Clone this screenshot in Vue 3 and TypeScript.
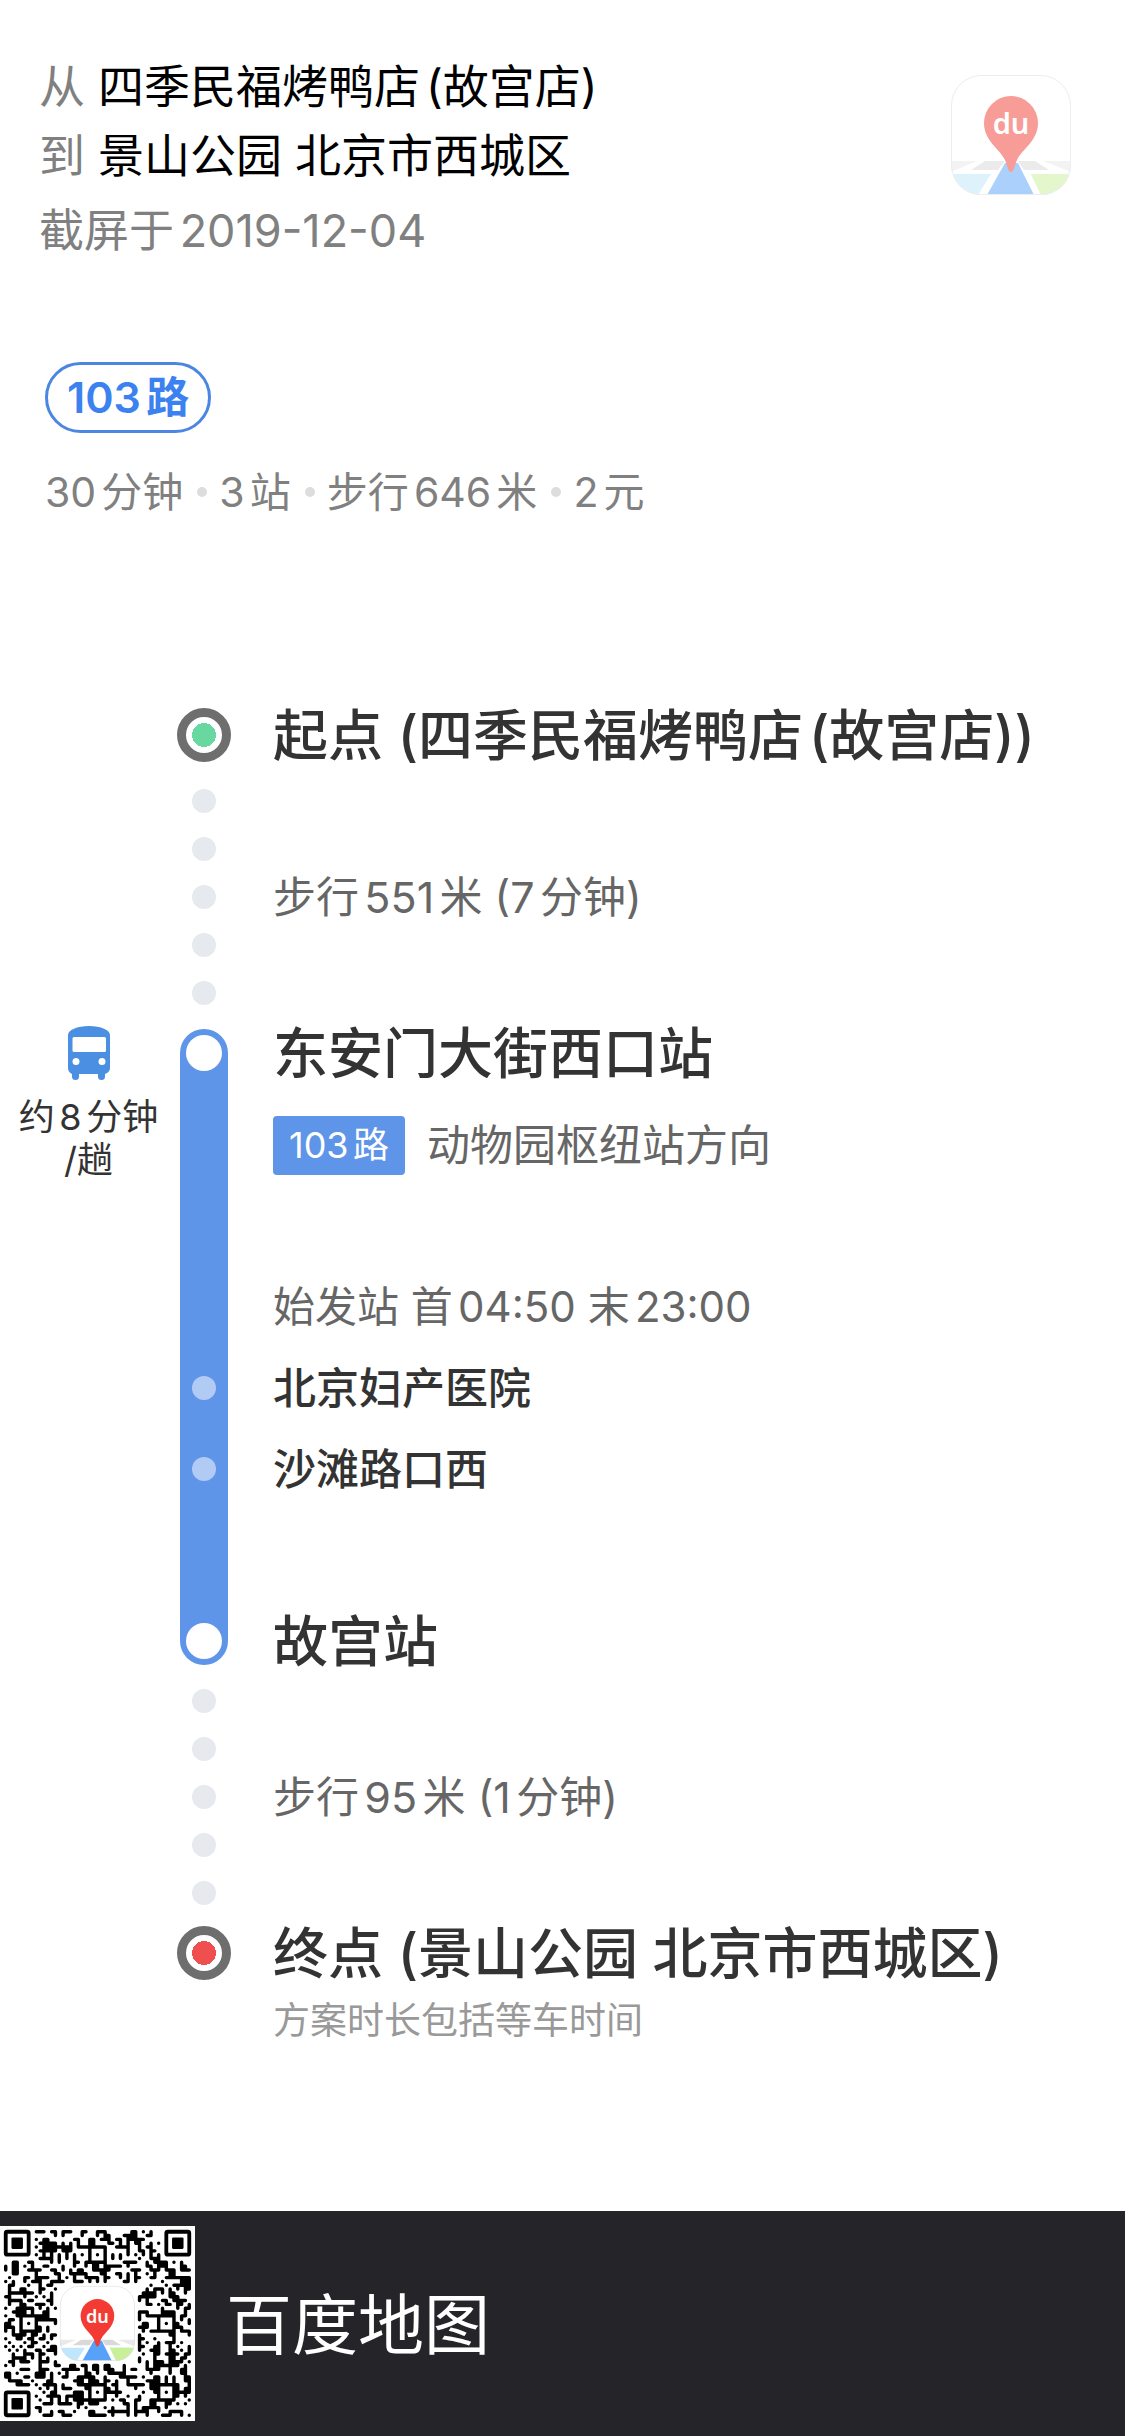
<script setup lang="ts">
interface Fact {
  id: number
  text: string
}

const facts: Fact[] = [
  { id: 1, text: '30分钟' },
  { id: 2, text: '3站' },
  { id: 3, text: '步行646米' },
  { id: 4, text: '2元' },
]

const WALK_DOTS = 5

// 49 x 49 module code: finder and alignment marks are fixed, the rest is a stable dot texture.
const SIZE = 49
const FINDERS = [[0, 0], [42, 0], [0, 42]]
const ALIGNS = [[24, 6], [6, 24], [42, 24], [24, 42], [42, 42]]

function isDark(x: number, y: number): boolean {
  if (x < 0 || y < 0 || x >= SIZE || y >= SIZE) return false
  for (const [fx, fy] of FINDERS) {
    if (x >= fx - 1 && x <= fx + 7 && y >= fy - 1 && y <= fy + 7) return false
  }
  for (const [ax, ay] of ALIGNS) {
    const d = Math.max(Math.abs(x - ax), Math.abs(y - ay))
    if (d <= 2) return d !== 1
  }
  if (x >= 14 && x <= 34 && y >= 14 && y <= 34) return false
  if (x === 6 || y === 6) return (x + y) % 2 === 0
  let h = Math.imul(x + 11, 374761393) ^ Math.imul(y + 29, 668265263)
  h = Math.imul(h ^ (h >>> 13), 1274126177)
  return ((h ^ (h >>> 16)) >>> 0) % 100 < 53
}

function buildModules(): { lines: string; blocks: string } {
  let lines = ''
  let blocks = ''
  for (let y = 0; y < SIZE; y++) {
    for (let x = 0; x < SIZE; x++) {
      if (!isDark(x, y)) continue
      const right = isDark(x + 1, y)
      const below = isDark(x, y + 1)
      lines += `M${x} ${y}h${right ? 1 : 0}`
      if (below) lines += `M${x} ${y}v1`
      if (right && below && isDark(x + 1, y + 1)) blocks += `M${x} ${y}h1v1h-1z`
    }
  }
  return { lines, blocks }
}

const modules = buildModules()
</script>

<template>
  <div class="page">
    <header class="head">
      <div class="trip">
        <p class="line"><span class="muted">从</span> 四季民福烤鸭店<span class="open">(</span>故宫店)</p>
        <p class="line"><span class="muted">到</span> 景山公园 北京市西城区</p>
        <p class="line date">截屏于2019-12-04</p>
      </div>
      <svg class="logo" viewBox="0 0 120 120" aria-label="百度地图">
        <use href="#map-logo" />
      </svg>
    </header>

    <svg class="defs" aria-hidden="true">
      <defs>
        <clipPath id="logo-clip"><rect width="120" height="120" rx="30" /></clipPath>
        <g id="map-logo">
          <g clip-path="url(#logo-clip)">
            <rect width="120" height="120" fill="#fff" />
            <path d="M0 86H26L0 97ZM92 86H120V97Z" fill="#e9e9ea" />
            <path d="M34 86H54L47 95H20ZM67 86H84L98 95H73Z" fill="#dad9da" />
            <path d="M4 99H40L27 120H0V101ZM80 99H116L120 101V120H90Z" fill="#bfe6fb" />
            <path d="M80 99H116L120 101V120H90Z" fill="#c9ef9a" />
            <path d="M54 88H67L83 120H36Z" fill="#57a2f8" />
          </g>
          <rect x="0.5" y="0.5" width="119" height="119" rx="30" fill="none" stroke="#dcdcdc" />
          <path d="M60 97C57 97 57 92 54 85C49 74 33 66 33 48A27 27 0 0 1 87 48C87 66 71 74 66 85C63 92 63 97 60 97Z" fill="#f33b33" />
          <text x="60" y="59" text-anchor="middle" class="du">du</text>
        </g>
      </defs>
    </svg>

    <section class="summary">
      <span class="route-pill">103路</span>
      <ul class="facts">
        <li v-for="fact in facts" :key="fact.id">{{ fact.text }}</li>
      </ul>
    </section>

    <main class="timeline">
      <section class="row start">
        <span class="terminal green"></span>
        <h2 class="title">起点 (四季民福烤鸭店<span class="open">(</span>故宫店))</h2>
      </section>

      <section class="row walk">
        <span class="dots"><i v-for="n in WALK_DOTS" :key="n"></i></span>
        <p class="detail">步行551米 (7分钟)</p>
      </section>

      <section class="ride">
        <span class="track"></span>
        <svg class="bus" viewBox="0 0 42 54" aria-hidden="true">
          <path
            fill="#4a8fe2"
            fill-rule="evenodd"
            d="M0 9C0 4 9 0 21 0S42 4 42 9V42Q42 46 37 48V50.500A3.500 3.500 0 0 1 30 50.500V48H11V50.500A3.500 3.500 0 0 1 4 50.500V48Q0 46 0 42ZM6 11Q4.500 11 4.500 12.500V24.500Q4.500 26 6 26H36.500Q38 26 38 24.500V12.500Q38 11 36.500 11ZM8 32A3.500 3.500 0 1 0 8 39A3.500 3.500 0 1 0 8 32ZM34 32A3.500 3.500 0 1 0 34 39A3.500 3.500 0 1 0 34 32Z"
          />
        </svg>
        <p class="interval">约8分钟<br />/趟</p>
        <span class="stop r1"></span>
        <h2 class="title r1">东安门大街西口站</h2>
        <p class="direction">
          <span class="route-tag">103路</span>
          <span>动物园枢纽站方向</span>
        </p>
        <p class="detail hours">始发站 首04:50 末23:00</p>
        <span class="via r4"></span>
        <p class="station r4">北京妇产医院</p>
        <span class="via r5"></span>
        <p class="station r5">沙滩路口西</p>
        <span class="stop r7"></span>
        <h2 class="title r7">故宫站</h2>
      </section>

      <section class="row walk">
        <span class="dots"><i v-for="n in WALK_DOTS" :key="n"></i></span>
        <p class="detail">步行95米 (1分钟)</p>
      </section>

      <section class="row">
        <span class="terminal red"></span>
        <h2 class="title">终点 (景山公园 北京市西城区)</h2>
      </section>
      <p class="note">方案时长包括等车时间</p>
    </main>

    <footer class="foot">
      <svg class="qr" viewBox="-1 -1 51 51" role="img" aria-label="二维码">
        <rect x="-1" y="-1" width="51" height="51" fill="#fff" />
        <g transform="translate(0.5 0.5)">
          <path :d="modules.lines" fill="none" stroke="#000" stroke-width="0.9" stroke-linecap="round" />
          <path :d="modules.blocks" />
        </g>
        <g v-for="([fx, fy], i) in FINDERS" :key="i">
          <rect :x="fx + 0.5" :y="fy + 0.5" width="6" height="6" rx="0.4" fill="none" stroke="#000" />
          <rect :x="fx + 2" :y="fy + 2" width="3" height="3" rx="0.3" />
        </g>
        <use href="#map-logo" transform="translate(14.7 14.7) scale(0.163)" />
      </svg>
      <strong class="brand">百度地图</strong>
    </footer>
  </div>
</template>

<style>
body {
  margin: 0;
  background: #fff;
}
</style>

<style scoped>
.page {
  display: flex;
  flex-direction: column;
  min-height: 100vh;
  background: #fff;
  color: #333;
  font-family: Inter, "Noto Sans CJK SC", sans-serif;
  text-autospace: normal;
}
p,
h2,
ul {
  margin: 0;
  padding: 0;
}
.open {
  margin-left: 6px;
}
.defs {
  position: absolute;
  width: 0;
  height: 0;
}
.du {
  font: 600 29px "Noto Sans", sans-serif;
  fill: #fff;
}

.head {
  display: flex;
  justify-content: space-between;
  padding: 52px 54px 0 39px;
}
.line {
  font-size: 46px;
  line-height: 69px;
  color: #000;
}
.muted,
.date {
  color: #808080;
}
.date {
  margin-top: 6px;
  font-size: 45px;
}
.logo {
  width: 120px;
  height: 120px;
  margin-top: 23px;
  opacity: 0.5;
}

.summary {
  display: flex;
  flex-direction: column;
  align-items: flex-start;
  margin-top: 97px;
  padding: 0 45px;
}
.route-pill {
  box-sizing: border-box;
  padding: 0 19px;
  border: 3px solid #4a86e2;
  border-radius: 36px;
  color: #3b82f0;
  font-size: 43px;
  font-weight: 600;
  line-height: 65px;
}
.facts {
  display: flex;
  margin-top: 29px;
  color: #808080;
  font-size: 41px;
  line-height: 60px;
  list-style: none;
}
.facts li {
  display: flex;
  align-items: center;
}
.facts li + li::before {
  content: "";
  width: 10px;
  height: 10px;
  margin: 0 12px 0 14px;
  border-radius: 50%;
  background: #ddd;
}

.timeline {
  flex: 1;
  margin-top: 189px;
}
.row,
.ride {
  display: grid;
  grid-template-columns: 177px 54px 1fr;
  align-items: center;
}
.row {
  grid-template-rows: 48px;
}
.start {
  margin-bottom: 6px;
}
.walk {
  grid-template-rows: 264px;
}
.title,
.detail,
.station,
.direction {
  grid-column: 3;
  padding-left: 42px;
  white-space: nowrap;
}
.title {
  font-size: 55px;
  font-weight: 500;
  line-height: 48px;
}
.detail {
  color: #666;
  font-size: 43px;
  line-height: 60px;
}
.station {
  font-size: 43px;
  font-weight: 500;
  line-height: 60px;
}
.terminal {
  grid-column: 2;
  box-sizing: border-box;
  width: 54px;
  height: 54px;
  border: 9px solid #6e6e6e;
  border-radius: 50%;
}
.green {
  background: radial-gradient(circle, #69d7a0 12px, #fff 12px);
}
.red {
  background: radial-gradient(circle, #f04f50 12px, #fff 12px);
}
.dots {
  grid-column: 2;
  display: flex;
  flex-direction: column;
  gap: 24px;
  align-items: center;
}
.dots i,
.via {
  width: 24px;
  height: 24px;
  border-radius: 50%;
  background: #e6e9ee;
}

.ride {
  grid-template-rows: 48px 190px 80px 81px 81px 108px 48px;
}
.track {
  grid-area: 1 / 2 / -1 / 2;
  align-self: stretch;
  justify-self: center;
  width: 48px;
  border-radius: 24px;
  background: #5e95e8;
}
.stop,
.via {
  grid-column: 2;
  justify-self: center;
}
.stop {
  width: 36px;
  height: 36px;
  border-radius: 50%;
  background: #fff;
}
.via {
  background: #b2cbf4;
}
.r1 {
  grid-row: 1;
}
.hours {
  grid-row: 3;
  font-size: 42px;
}
.r4 {
  grid-row: 4;
}
.r5 {
  grid-row: 5;
}
.r7 {
  grid-row: 7;
}
.bus {
  grid-area: 1 / 1;
  justify-self: center;
  width: 42px;
  height: 54px;
}
.interval {
  grid-area: 2 / 1;
  align-self: start;
  padding-top: 19px;
  font-size: 36px;
  line-height: 43px;
  text-align: center;
}
.direction {
  grid-row: 2;
  align-self: start;
  display: flex;
  gap: 22px;
  padding-top: 39px;
  color: #666;
  font-size: 43px;
  line-height: 59px;
}
.route-tag {
  padding: 0 16px;
  border-radius: 4px;
  background: #5e95e8;
  color: #fff;
  font-size: 36px;
}
.note {
  margin: 20px 0 60px 273px;
  color: #999;
  font-size: 37px;
  line-height: 48px;
}

.foot {
  display: flex;
  align-items: center;
  gap: 31px;
  height: 225px;
  background: #252428;
}
.qr {
  width: 195px;
  height: 195px;
}
.brand {
  padding-bottom: 8px;
  color: #fff;
  font-size: 66px;
  font-weight: 400;
}
</style>
